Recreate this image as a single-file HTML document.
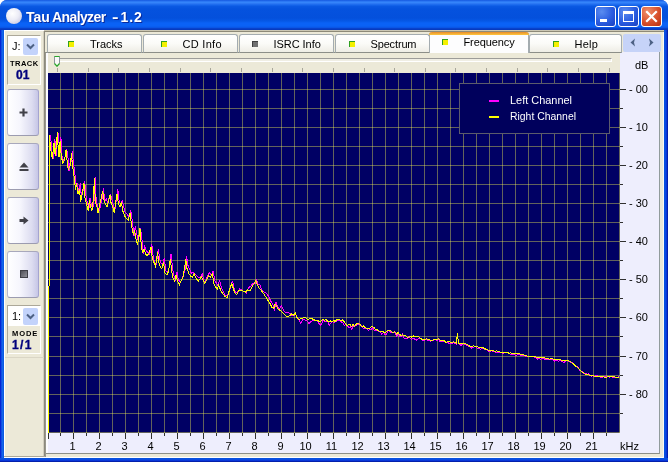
<!DOCTYPE html>
<html><head><meta charset="utf-8"><title>Tau Analyzer - 1.2</title>
<style>
html,body{margin:0;padding:0;background:#fff;}
body{width:668px;height:462px;overflow:hidden;position:relative;font-family:"Liberation Sans",sans-serif;font-size:11px;color:#000;}
#win,#win *{position:absolute;box-sizing:border-box;}
#win{will-change:transform;left:0;top:0;width:668px;height:462px;border-radius:7px 7px 0 0;overflow:hidden;
 background:#0A48D8;}
#frameL{left:0;top:30px;width:4px;height:432px;background:linear-gradient(90deg,#0019CF 0,#0831D9 25%,#166AEE 50%,#0855DD 100%);}
#frameR{left:664px;top:30px;width:4px;height:432px;background:linear-gradient(90deg,#0855DD 0,#0A4AE0 40%,#0831D9 70%,#00138C 100%);}
#frameB{left:0;top:458px;width:668px;height:4px;background:linear-gradient(180deg,#0855DD 0,#0A4AE0 40%,#0831D9 70%,#00138C 100%);}
#title{left:0;top:0;width:668px;height:30px;
 background:linear-gradient(180deg,#1458E0 0,#2C78F4 1.5px,#3484FA 2.5px,#2C78F4 3.5px,#1666EC 5px,#0A58E2 6.5px,#0552DE 9px,#0450DC 18px,#0658E6 21px,#0A62F6 23px,#0A62F6 26px,#0A56E6 27.5px,#0842CC 28.5px,#0636B8 30px);}
#tt{left:26px;width:130px;top:8px;height:18px;line-height:18px;font-size:14px;font-weight:bold;color:#fff;white-space:nowrap;text-shadow:1px 1px 0 #0A2A9C;letter-spacing:0px;}
#ico{left:6px;top:8px;width:16px;height:16px;border-radius:50%;background:radial-gradient(circle at 40% 35%,#FFFFFF 0,#ECECF6 45%,#C8C8E0 85%,#A8A8D0 100%);}
.cb{top:6px;width:21px;height:21px;border:1px solid #fff;border-radius:3px;background:radial-gradient(circle at 30% 25%,#5A8CF0 0,#2A5CE0 55%,#1840C0 100%);}
#cbx{background:radial-gradient(circle at 30% 25%,#F0906C 0,#D8502C 55%,#B83010 100%);}
#client{left:4px;top:30px;width:660px;height:428px;background:#ECE9D8;}
/* left panel */
.sunk{border:1px solid;border-color:#ACA899 #fff #fff #ACA899;background:#ECE9D8;}
.combo{background:#fff;}
.dd{background:#C3D3FB;border-radius:2px;}
.btn{left:7px;width:32px;height:47px;border:1px solid;border-color:#A8A8BC #A4A4D0 #9C9CB0 #B8B8CC;border-radius:3px;background:linear-gradient(90deg,#FFFFFF 0,#F6F6FD 40%,#DCDCF0 80%,#C6C6E6 100%);}
.pix{font-size:7px;font-weight:bold;letter-spacing:0.4px;transform-origin:0 0;transform:scaleX(1.08);white-space:nowrap;line-height:7px;}
.big{-webkit-text-stroke:0.35px #00007C;font-size:12px;letter-spacing:0px;font-weight:bold;color:#00007C;white-space:nowrap;line-height:12px;}
/* tabs */
.tab{top:34px;height:19px;border:1px solid #A4ACB0;border-bottom:1px solid #8C8E88;border-radius:3px 3px 0 0;background:linear-gradient(180deg,#FFFFFF 0,#FBFBF8 50%,#EEEDE5 100%);}
.tab span{text-align:left;top:3px;line-height:13px;white-space:nowrap;}
.tab i{width:6px;height:6px;top:6px;background:#F4F000;border-top:1px solid #30A020;border-left:1px solid #30A020;}
.tk{width:1px;background:#303030;}
.tkh{height:1px;background:#303030;}
.xl{top:440px;width:21px;text-align:center;line-height:12px;}
.yl{left:629px;margin-top:1px;line-height:13px;white-space:nowrap;}
.tt{top:68px;width:1px;height:4px;background:#A8A69A;}
</style></head><body>
<div id="win">
 <div id="title">
  <div id="ico"></div>
  <div id="tt"><span style="left:0">Tau </span><span style="left:26px;letter-spacing:-0.6px">Analyzer </span><span style="left:86px;transform:scaleX(1.4);transform-origin:0 0">- </span><span style="left:94.5px;letter-spacing:0.9px">1.2</span></div>
  <div class="cb" style="left:595px"><div style="left:4px;top:12px;width:7px;height:3px;background:#fff"></div></div>
  <div class="cb" style="left:618px"><div style="left:4px;top:4px;width:11px;height:11px;border:1px solid #fff;border-top-width:3px"></div></div>
  <div class="cb" id="cbx" style="left:641px"><svg style="left:3px;top:3px" width="13" height="13" viewBox="0 0 13 13"><path d="M2 2L11 11M11 2L2 11" stroke="#fff" stroke-width="2.2" stroke-linecap="square"/></svg></div>
 </div>
 <div id="frameL"></div><div id="frameR"></div><div id="frameB"></div>
 <div id="client">
  <!-- coordinates inside client are window coords minus (4,30) -->
  <div id="c" style="left:-4px;top:-30px;width:668px;height:462px;">
   <!-- outer lines -->
   <div style="left:4px;top:30px;width:40px;height:1px;background:#fff"></div>
   <div style="left:4px;top:30px;width:1px;height:427px;background:#fff"></div>
   <div style="left:44px;top:30px;width:620px;height:1px;background:#CBC7B4"></div>
   <div style="left:44px;top:31px;width:620px;height:1px;background:#8E8A78"></div>
   <div style="left:44px;top:31px;width:1px;height:426px;background:#8C8A7E"></div>
   <div style="left:45px;top:53px;width:1px;height:404px;background:#9A988C"></div>
   <div style="left:46px;top:53px;width:2px;height:400px;background:#FCFCFF;z-index:2"></div>
   <div style="left:4px;top:456px;width:41px;height:1px;background:#ACA899"></div>
   <div style="left:4px;top:457px;width:660px;height:1px;background:#fff"></div>
   <div style="left:663px;top:32px;width:1px;height:426px;background:#FAF9F4"></div>
   <div style="left:43px;top:31px;width:1px;height:425px;background:#D2CEBE"></div>
   <div style="left:5px;top:357px;width:39px;height:1px;background:#DAD6C6"></div>

   <!-- left box 1 -->
   <div class="sunk" style="left:7px;top:35px;width:34px;height:50px"></div>
   <div class="combo" style="left:8px;top:36px;width:32px;height:20px"></div>
   <div style="left:12px;top:40px;line-height:13px;font-size:11px">J:</div>
   <div class="dd" style="left:23px;top:38px;width:15px;height:17px"><svg style="left:3px;top:5px" width="9" height="7" viewBox="0 0 9 7"><path d="M1 1.5L4.5 5L8 1.5" fill="none" stroke="#4D6185" stroke-width="2"/></svg></div>
   <div class="pix" style="left:10px;top:60px">TRACK</div>
   <div class="big" style="left:16px;top:69px">01</div>

   <!-- buttons -->
   <div class="btn" style="top:89px"><svg style="left:11px;top:18px" width="9" height="9" viewBox="0 0 9 9"><path d="M4.5 0.5V8.5M0.5 4.5H8.5" stroke="#404048" stroke-width="2.2"/></svg></div>
   <div class="btn" style="top:143px"><svg style="left:11px;top:18px" width="10" height="10" viewBox="0 0 10 10"><path d="M5 0.5L9.5 5.5H0.5Z" fill="#404048"/><rect x="0.5" y="7" width="9" height="2" fill="#404048"/></svg></div>
   <div class="btn" style="top:197px"><svg style="left:11px;top:18px" width="10" height="9" viewBox="0 0 10 9"><path d="M0.5 3H4.5V0.5L9.5 4.5L4.5 8.5V6H0.5Z" fill="#404048"/></svg></div>
   <div class="btn" style="top:251px"><div style="left:12px;top:18px;width:8px;height:8px;background:linear-gradient(135deg,#505058,#909098);border:1px solid #404048"></div></div>

   <!-- left box 2 -->
   <div class="sunk" style="left:7px;top:305px;width:34px;height:49px"></div>
   <div class="combo" style="left:8px;top:306px;width:32px;height:20px"></div>
   <div style="left:12px;top:310px;line-height:13px;font-size:11px">1:</div>
   <div class="dd" style="left:23px;top:308px;width:15px;height:17px"><svg style="left:3px;top:5px" width="9" height="7" viewBox="0 0 9 7"><path d="M1 1.5L4.5 5L8 1.5" fill="none" stroke="#4D6185" stroke-width="2"/></svg></div>
   <div class="pix" style="left:12px;top:330px;letter-spacing:0.8px">MODE</div>
   <div class="big" style="left:12px;top:339px;letter-spacing:1.4px">1/1</div>

   <!-- tab page -->
   <div style="left:46px;top:52px;width:614px;height:402px;background:#EEEEFD;border-right:1px solid #919B9C;border-bottom:1px solid #8C8E88;"></div>
   <div style="left:45px;top:52px;width:577px;height:1px;background:#8C8E88"></div>
   <div style="left:48px;top:53px;width:572px;height:20px;background:#ECE9D8"></div>
   <!-- trackbar -->
   <div style="left:59px;top:58px;width:553px;height:4px;border:1px solid;border-color:#9D9C99 #fff #fff #9D9C99;background:#F0EEE4"></div>
   <svg style="left:54px;top:56px" width="6" height="11" viewBox="0 0 6 11"><path d="M0.5 0.5H5.5V7.5L3 10.2L0.5 7.5Z" fill="#FAFAF8" stroke="#8C949C" stroke-width="1"/><path d="M0.5 0.5H5.5" stroke="#28A828" stroke-width="1"/><path d="M0.5 7.5L3 10.2L5.5 7.5" fill="none" stroke="#28A828" stroke-width="1.2"/></svg>
   <i class="tt" style="left:57px"></i>
<i class="tt" style="left:88px"></i>
<i class="tt" style="left:118px"></i>
<i class="tt" style="left:149px"></i>
<i class="tt" style="left:180px"></i>
<i class="tt" style="left:210px"></i>
<i class="tt" style="left:241px"></i>
<i class="tt" style="left:272px"></i>
<i class="tt" style="left:302px"></i>
<i class="tt" style="left:333px"></i>
<i class="tt" style="left:364px"></i>
<i class="tt" style="left:394px"></i>
<i class="tt" style="left:425px"></i>
<i class="tt" style="left:455px"></i>
<i class="tt" style="left:486px"></i>
<i class="tt" style="left:517px"></i>
<i class="tt" style="left:547px"></i>
<i class="tt" style="left:578px"></i>
<i class="tt" style="left:609px"></i>

   <!-- tabs -->
   <div class="tab" style="left:47px;width:95px"><i style="left:20px"></i><span style="left:42px">Tracks</span></div>
   <div class="tab" style="left:143px;width:95px"><i style="left:17px"></i><span style="left:38.5px;letter-spacing:0.3px">CD Info</span></div>
   <div class="tab" style="left:239px;width:95px"><i style="left:12px;background:#707070;border-color:#404040"></i><span style="left:33.5px;letter-spacing:-0.05px">ISRC Info</span></div>
   <div class="tab" style="left:335px;width:95px"><i style="left:13px"></i><span style="left:34.5px;letter-spacing:-0.15px">Spectrum</span></div>
   <div class="tab" style="left:529px;width:93px"><i style="left:23px"></i><span style="left:44.5px;letter-spacing:0.25px">Help</span></div>
   <div class="tab" style="left:429px;top:32px;width:100px;height:21px;background:#FDFDFE;border-top:none;border-bottom:none"><div style="left:-1px;top:0;width:100px;height:3px;background:linear-gradient(180deg,#E68B2C,#FFC73C);border-radius:3px 3px 0 0"></div><i style="left:12px;top:7px"></i><span style="left:33.5px;top:4px;letter-spacing:-0.1px">Frequency</span></div>
   <!-- tab scroll -->
   <div style="left:623px;top:34px;width:38px;height:18px;background:#C6D3F8;border-radius:2px"><svg style="left:7px;top:4px" width="26" height="9" viewBox="0 0 26 9"><path d="M5 0.5L0.5 4.5L5 8.5L4 4.5ZM19 0.5L23.5 4.5L19 8.5L20 4.5Z" fill="#4D6185"/></svg></div>

   <!-- plot -->
   <svg style="left:48px;top:73px" width="572" height="360" viewBox="0 0 572 360">
    <rect x="0" y="0" width="572" height="360" fill="#000064"/>
    <g stroke="#FFFF50" stroke-opacity="0.39" stroke-width="1" shape-rendering="crispEdges">
<line x1="12.5" y1="0" x2="12.5" y2="360"/>
<line x1="25.5" y1="0" x2="25.5" y2="360"/>
<line x1="38.5" y1="0" x2="38.5" y2="360"/>
<line x1="51.5" y1="0" x2="51.5" y2="360"/>
<line x1="64.5" y1="0" x2="64.5" y2="360"/>
<line x1="77.5" y1="0" x2="77.5" y2="360"/>
<line x1="90.5" y1="0" x2="90.5" y2="360"/>
<line x1="103.5" y1="0" x2="103.5" y2="360"/>
<line x1="116.5" y1="0" x2="116.5" y2="360"/>
<line x1="129.5" y1="0" x2="129.5" y2="360"/>
<line x1="142.5" y1="0" x2="142.5" y2="360"/>
<line x1="155.5" y1="0" x2="155.5" y2="360"/>
<line x1="168.5" y1="0" x2="168.5" y2="360"/>
<line x1="181.5" y1="0" x2="181.5" y2="360"/>
<line x1="194.5" y1="0" x2="194.5" y2="360"/>
<line x1="207.5" y1="0" x2="207.5" y2="360"/>
<line x1="220.5" y1="0" x2="220.5" y2="360"/>
<line x1="233.5" y1="0" x2="233.5" y2="360"/>
<line x1="246.5" y1="0" x2="246.5" y2="360"/>
<line x1="259.5" y1="0" x2="259.5" y2="360"/>
<line x1="272.5" y1="0" x2="272.5" y2="360"/>
<line x1="285.5" y1="0" x2="285.5" y2="360"/>
<line x1="298.5" y1="0" x2="298.5" y2="360"/>
<line x1="311.5" y1="0" x2="311.5" y2="360"/>
<line x1="324.5" y1="0" x2="324.5" y2="360"/>
<line x1="337.5" y1="0" x2="337.5" y2="360"/>
<line x1="350.5" y1="0" x2="350.5" y2="360"/>
<line x1="363.5" y1="0" x2="363.5" y2="360"/>
<line x1="376.5" y1="0" x2="376.5" y2="360"/>
<line x1="389.5" y1="0" x2="389.5" y2="360"/>
<line x1="402.5" y1="0" x2="402.5" y2="360"/>
<line x1="415.5" y1="0" x2="415.5" y2="360"/>
<line x1="428.5" y1="0" x2="428.5" y2="360"/>
<line x1="441.5" y1="0" x2="441.5" y2="360"/>
<line x1="454.5" y1="0" x2="454.5" y2="360"/>
<line x1="467.5" y1="0" x2="467.5" y2="360"/>
<line x1="480.5" y1="0" x2="480.5" y2="360"/>
<line x1="493.5" y1="0" x2="493.5" y2="360"/>
<line x1="506.5" y1="0" x2="506.5" y2="360"/>
<line x1="519.5" y1="0" x2="519.5" y2="360"/>
<line x1="532.5" y1="0" x2="532.5" y2="360"/>
<line x1="545.5" y1="0" x2="545.5" y2="360"/>
<line x1="558.5" y1="0" x2="558.5" y2="360"/>
<line x1="571.5" y1="0" x2="571.5" y2="360"/>
<line x1="0" y1="16.5" x2="572" y2="16.5"/>
<line x1="0" y1="35.5" x2="572" y2="35.5"/>
<line x1="0" y1="54.5" x2="572" y2="54.5"/>
<line x1="0" y1="73.5" x2="572" y2="73.5"/>
<line x1="0" y1="92.5" x2="572" y2="92.5"/>
<line x1="0" y1="111.5" x2="572" y2="111.5"/>
<line x1="0" y1="130.5" x2="572" y2="130.5"/>
<line x1="0" y1="149.5" x2="572" y2="149.5"/>
<line x1="0" y1="168.5" x2="572" y2="168.5"/>
<line x1="0" y1="187.5" x2="572" y2="187.5"/>
<line x1="0" y1="206.5" x2="572" y2="206.5"/>
<line x1="0" y1="225.5" x2="572" y2="225.5"/>
<line x1="0" y1="244.5" x2="572" y2="244.5"/>
<line x1="0" y1="263.5" x2="572" y2="263.5"/>
<line x1="0" y1="283.5" x2="572" y2="283.5"/>
<line x1="0" y1="302.5" x2="572" y2="302.5"/>
<line x1="0" y1="321.5" x2="572" y2="321.5"/>
<line x1="0" y1="340.5" x2="572" y2="340.5"/>
<line x1="0" y1="359.5" x2="572" y2="359.5"/>
    </g>
    <rect x="411.5" y="10.5" width="150" height="50" fill="#00005C" stroke="#5C5C6C" shape-rendering="crispEdges"/>
    <line x1="441" y1="28" x2="451" y2="28" stroke="#FF00FF" stroke-width="2" shape-rendering="crispEdges"/>
    <line x1="441" y1="44" x2="451" y2="44" stroke="#FFFF00" stroke-width="2" shape-rendering="crispEdges"/>
    <text x="462" y="30.5" textLength="62" lengthAdjust="spacingAndGlyphs" fill="#fff" font-family="Liberation Sans, sans-serif" font-size="11">Left Channel</text>
    <text x="462" y="46.5" textLength="66" lengthAdjust="spacingAndGlyphs" fill="#fff" font-family="Liberation Sans, sans-serif" font-size="11">Right Channel</text>
    <path d="M1.5 62V213M0.5 213V360" stroke="#FFFF00" stroke-width="1" fill="none" shape-rendering="crispEdges"/>
    <polyline fill="none" stroke="#FF00FF" stroke-width="1" shape-rendering="crispEdges" points="2.0,62.3 2.9,66.5 3.7,76.9 5.1,86.4 5.8,76.5 6.9,66.5 8.0,83.2 9.1,69.4 10.2,60.4 10.9,69.0 11.8,80.2 12.9,64.3 14.0,83.4 15.6,88.0 16.7,85.4 17.7,80.5 18.8,76.6 19.9,83.9 21.0,97.8 22.1,89.9 23.2,88.3 24.2,78.2 25.3,89.1 26.4,96.1 27.4,106.3 28.2,112.6 29.3,111.3 30.8,119.4 32.3,110.3 33.4,124.4 35.2,117.4 36.7,108.2 37.8,122.4 39.5,130.1 41.0,134.8 42.1,124.6 43.2,130.8 44.7,136.5 46.4,125.2 47.1,103.6 48.2,127.9 49.7,133.4 50.7,138.9 52.5,132.8 54.0,125.9 55.5,115.5 56.8,128.5 58.3,126.2 59.8,130.3 61.6,122.5 62.7,121.4 63.7,125.5 65.5,133.6 67.0,136.4 68.5,125.0 69.8,116.4 71.3,129.9 72.8,130.2 74.1,127.5 75.6,134.0 77.2,139.6 78.9,141.0 81.1,143.7 82.8,137.5 84.5,150.0 86.0,163.1 87.3,152.7 88.8,161.3 90.4,169.1 91.7,158.3 92.7,156.2 94.1,168.1 95.4,181.1 96.8,173.5 98.4,178.1 100.1,179.4 101.8,181.2 103.8,170.9 105.1,182.5 106.6,189.5 108.3,191.3 110.3,175.7 111.6,186.0 113.1,190.4 114.8,191.1 116.3,184.9 117.8,197.7 119.6,199.8 121.3,194.5 123.1,180.7 124.4,194.1 126.1,203.8 127.6,207.1 128.9,198.9 130.4,206.9 132.2,208.6 133.7,207.2 135.8,200.2 137.3,195.8 138.6,183.5 139.8,192.0 141.7,196.4 143.4,200.3 145.1,199.7 147.1,201.3 148.8,202.9 151.0,204.5 152.5,203.4 154.2,201.0 156.0,208.3 157.5,208.1 159.6,202.6 161.2,199.6 163.3,202.2 165.1,198.2 166.8,207.9 168.3,210.0 170.0,212.8 171.5,206.7 173.3,214.5 175.4,219.2 177.6,223.1 179.8,221.4 181.3,218.3 183.2,210.9 184.7,208.3 186.2,216.4 188.0,219.7 189.7,218.4 191.8,215.9 194.0,217.4 196.2,218.5 198.3,219.9 200.5,214.6 202.7,213.1 204.8,210.4 207.0,210.9 208.5,207.1 210.0,211.3 211.8,211.3 213.9,217.0 216.1,219.3 218.3,220.2 220.4,222.9 222.6,227.7 224.8,231.8 226.5,236.5 228.0,229.2 229.5,233.0 231.2,235.9 233.4,232.9 235.6,237.4 237.7,239.9 239.9,239.1 242.1,240.7 243.7,242.9 245.9,242.4 247.6,240.9 249.1,243.8 250.7,246.3 252.8,250.2 255.0,246.2 257.1,247.2 258.9,247.6 261.0,250.8 263.2,248.2 265.3,247.6 267.5,247.1 269.7,248.6 272.3,252.5 273.8,250.2 275.3,246.6 276.8,248.7 278.3,248.2 279.8,248.9 281.3,252.4 282.8,250.1 284.3,248.8 285.8,249.5 287.3,248.8 288.8,247.7 290.3,248.0 291.8,247.6 293.3,248.9 294.8,249.5 296.3,252.8 297.8,250.9 299.3,252.5 300.8,254.8 302.3,254.0 303.8,256.5 305.3,252.8 306.8,253.0 308.3,252.3 309.8,251.9 311.3,250.2 312.8,251.8 314.3,254.8 315.8,255.3 317.3,254.9 318.8,255.8 320.3,257.5 321.8,256.8 323.3,256.8 324.8,253.9 326.3,257.4 327.8,257.7 329.3,256.4 330.8,258.6 332.3,258.9 333.8,261.3 335.3,259.4 336.8,261.2 338.3,261.2 339.8,257.9 341.3,257.5 342.8,259.4 344.3,259.1 345.8,259.4 347.3,259.7 348.8,263.5 350.3,260.5 351.8,263.2 353.3,263.7 354.8,261.0 356.3,265.9 357.8,265.1 359.3,265.7 360.8,263.9 362.3,265.5 363.8,266.2 365.3,265.1 366.8,266.4 368.3,267.1 369.8,266.2 371.3,265.7 372.5,265.7 374.0,267.3 375.5,267.2 377.0,267.1 378.5,265.9 380.0,267.8 381.5,267.8 383.0,268.1 384.5,267.6 386.0,267.2 387.5,266.4 389.0,267.4 390.5,266.5 392.0,268.5 393.5,268.1 395.0,269.0 396.5,268.8 398.0,270.1 399.5,269.1 401.0,270.4 402.5,270.2 404.0,270.4 405.5,268.8 407.0,270.6 408.3,271.3 409.4,261.1 410.5,270.6 411.5,271.4 413.0,272.3 414.5,271.1 416.0,270.9 417.5,271.2 419.0,272.3 420.5,273.4 422.0,273.8 423.5,275.1 425.0,274.1 426.5,273.9 428.0,273.7 429.5,275.3 431.0,274.9 432.5,276.2 434.0,275.3 435.5,275.4 437.0,277.1 438.5,276.7 440.0,278.3 441.5,278.4 443.0,277.9 444.5,278.1 446.0,278.7 447.5,279.4 449.0,279.3 450.5,279.1 452.0,279.6 453.5,279.6 455.0,281.1 456.5,279.5 458.0,279.7 459.5,279.6 461.0,280.8 462.5,281.3 464.0,281.5 465.5,281.6 467.0,282.1 468.5,282.3 470.0,281.3 471.5,281.2 473.0,282.8 474.5,282.8 476.0,282.2 477.5,283.3 479.0,283.7 480.5,283.8 482.0,283.5 483.5,283.6 485.0,283.6 486.5,284.2 488.0,284.5 489.5,286.1 491.0,285.1 492.5,286.2 494.0,285.2 495.5,285.4 497.0,286.3 498.5,286.7 500.0,286.2 501.5,286.2 503.0,286.6 504.5,286.5 506.0,288.3 507.5,287.0 509.0,287.2 510.5,288.4 512.0,286.8 513.5,288.0 515.0,289.0 516.5,289.0 518.0,287.9 519.5,287.8 521.0,288.2 522.5,289.2 524.0,289.3 525.5,291.0 527.0,292.9 528.5,293.2 530.0,294.4 531.5,297.3 533.0,298.2 534.5,298.7 536.0,300.3 537.5,300.6 539.0,301.2 540.5,300.9 542.0,302.8 543.5,303.3 545.0,302.8 546.5,303.6 548.0,302.5 549.5,302.9 551.0,303.6 552.5,304.5 554.0,304.2 555.5,303.6 557.0,303.5 558.5,303.8 560.0,303.6 561.5,304.3 563.0,303.1 564.5,304.1 566.0,304.0 567.5,304.4 569.0,304.5 570.5,304.2 570.7,303.5"/>
    <polyline fill="none" stroke="#FFFF00" stroke-width="1" shape-rendering="crispEdges" points="1.2,63.8 2.1,69.7 2.9,77.3 4.3,86.0 5.0,79.5 6.1,69.7 7.2,82.7 8.3,73.0 9.4,58.9 10.1,74.0 11.0,83.8 12.1,67.6 13.2,82.7 14.8,90.3 15.9,88.0 16.9,85.0 18.0,77.0 19.1,88.0 20.2,96.8 21.3,94.6 22.4,92.5 23.4,80.5 24.5,92.5 25.6,100.0 26.6,108.0 27.4,116.5 28.5,110.0 30.0,120.6 31.5,116.3 32.6,129.3 34.4,120.6 35.9,109.8 37.0,124.9 38.7,131.4 40.2,137.9 41.3,127.1 42.4,133.6 43.9,137.9 45.6,124.9 46.3,105.4 47.4,129.3 48.9,133.6 49.9,140.1 51.7,131.4 53.2,124.9 54.7,118.4 56.0,127.1 57.5,131.4 59.0,133.6 60.8,127.1 61.9,121.7 62.9,129.3 64.7,133.6 66.2,140.1 67.7,129.3 69.0,120.6 70.5,131.4 72.0,133.6 73.3,129.3 74.8,137.9 76.4,142.2 78.1,145.5 80.3,147.0 82.0,140.0 83.7,152.8 85.2,161.4 86.5,157.0 88.0,165.7 89.6,172.2 90.9,163.6 91.9,155.0 93.3,172.0 94.6,180.3 96.0,176.0 97.6,181.4 99.3,182.5 101.0,180.3 103.0,173.8 104.3,185.7 105.8,189.0 107.5,193.3 109.5,179.2 110.8,189.0 112.3,194.4 114.0,195.4 115.5,189.0 117.0,199.8 118.8,202.0 120.5,198.7 122.3,185.7 123.6,197.6 125.3,206.3 126.8,208.4 128.1,202.0 129.6,208.4 131.4,211.7 132.9,208.4 135.0,204.0 136.5,195.4 137.8,185.7 139.0,195.4 140.9,200.9 142.6,203.0 144.3,204.0 146.3,200.9 148.0,205.2 150.2,208.4 151.7,206.3 153.4,204.0 155.2,207.3 156.7,210.6 158.8,206.3 160.4,203.0 162.5,204.0 164.3,200.9 166.0,210.6 167.5,213.8 169.2,216.0 170.7,211.7 172.5,217.0 174.6,220.3 176.8,223.5 179.0,224.7 180.5,220.3 182.4,213.8 183.9,210.5 185.4,216.0 187.2,220.3 188.9,221.4 191.0,217.0 193.2,217.0 195.4,218.1 197.5,219.2 199.7,217.0 201.9,218.1 204.0,213.8 206.2,210.5 207.7,207.7 209.2,211.6 211.0,214.9 213.1,217.0 215.3,220.3 217.5,223.5 219.6,226.8 221.8,230.0 224.0,234.4 225.7,235.4 227.2,231.0 228.7,233.3 230.4,236.5 232.6,237.6 234.8,239.8 236.9,242.0 239.1,244.1 241.3,243.0 243.4,240.9 245.6,242.0 247.3,239.8 248.8,244.1 250.4,246.3 252.5,245.8 254.7,245.2 256.8,244.1 258.6,245.8 260.7,246.3 262.9,245.2 265.0,246.3 267.2,247.4 269.4,247.4 272.0,249.0 273.5,247.4 275.0,245.8 276.5,247.5 278.0,246.3 279.5,248.3 281.0,248.3 282.5,247.9 284.0,249.1 285.5,247.4 287.0,248.4 288.5,246.9 290.0,246.4 291.5,246.7 293.0,248.0 294.5,247.0 296.0,248.4 297.5,250.6 299.0,252.5 300.5,251.8 302.0,251.6 303.5,253.6 305.0,251.4 306.5,253.6 308.0,251.3 309.5,250.1 311.0,250.8 312.5,252.1 314.0,254.2 315.5,253.1 317.0,254.7 318.5,255.4 320.0,255.2 321.5,255.5 323.0,254.0 324.5,253.8 326.0,254.2 327.5,256.4 329.0,256.8 330.5,257.5 332.0,258.7 333.5,258.6 335.0,258.5 336.5,259.9 338.0,259.1 339.5,257.6 341.0,257.8 342.5,257.7 344.0,259.0 345.5,259.2 347.0,258.7 348.5,260.9 350.0,259.7 351.5,261.2 353.0,262.6 354.5,261.8 356.0,263.0 357.5,262.5 359.0,264.0 360.5,264.1 362.0,263.6 363.5,264.1 365.0,262.8 366.5,263.5 368.0,263.3 369.5,263.3 371.0,263.8 372.5,265.3 374.0,266.3 375.5,266.1 377.0,266.9 378.5,265.8 380.0,267.0 381.5,266.9 383.0,267.5 384.5,267.2 386.0,266.2 387.5,266.4 389.0,266.9 390.5,265.8 392.0,267.0 393.5,267.1 395.0,267.6 396.5,268.0 398.0,269.7 399.5,268.7 401.0,268.9 402.5,269.1 404.0,269.9 405.5,268.8 407.0,269.8 408.3,270.2 409.4,260.4 410.5,270.2 411.5,270.3 413.0,270.8 414.5,270.7 416.0,270.8 417.5,270.7 419.0,271.6 420.5,272.3 422.0,273.5 423.5,273.8 425.0,272.9 426.5,273.1 428.0,273.4 429.5,273.7 431.0,274.4 432.5,274.9 434.0,274.9 435.5,275.0 437.0,275.9 438.5,276.2 440.0,276.8 441.5,277.6 443.0,277.6 444.5,277.7 446.0,278.0 447.5,278.3 449.0,277.8 450.5,278.9 452.0,279.0 453.5,279.3 455.0,279.5 456.5,279.3 458.0,279.6 459.5,279.5 461.0,280.2 462.5,279.9 464.0,280.1 465.5,280.4 467.0,280.5 468.5,280.8 470.0,280.8 471.5,280.9 473.0,281.3 474.5,281.6 476.0,282.1 477.5,282.2 479.0,283.1 480.5,283.2 482.0,283.0 483.5,283.3 485.0,283.6 486.5,283.8 488.0,283.9 489.5,284.6 491.0,284.9 492.5,284.7 494.0,284.9 495.5,284.8 497.0,285.0 498.5,285.4 500.0,285.5 501.5,286.1 503.0,285.8 504.5,285.9 506.0,286.8 507.5,286.7 509.0,286.6 510.5,287.0 512.0,286.8 513.5,287.3 515.0,287.7 516.5,287.8 518.0,287.8 519.5,287.7 521.0,288.1 522.5,288.7 524.0,289.9 525.5,290.8 527.0,292.5 528.5,293.7 530.0,295.0 531.5,296.8 533.0,298.2 534.5,299.3 536.0,300.2 537.5,301.1 539.0,301.8 540.5,301.9 542.0,302.6 543.5,302.8 545.0,302.8 546.5,303.1 548.0,303.5 549.5,303.5 551.0,303.8 552.5,304.0 554.0,303.7 555.5,304.0 557.0,304.1 558.5,304.1 560.0,303.8 561.5,303.8 563.0,303.8 564.5,303.8 566.0,303.8 567.5,304.1 569.0,304.3 570.5,304.2 570.7,304.0"/>
   </svg>
   <!-- axes -->
   <i class="tk" style="left:48px;top:433px;height:6px"></i>
<i class="tk" style="left:60px;top:433px;height:3px"></i>
<i class="tk" style="left:73px;top:433px;height:6px"></i>
<span class="xl" style="left:62px">1</span>
<i class="tk" style="left:86px;top:433px;height:3px"></i>
<i class="tk" style="left:99px;top:433px;height:6px"></i>
<span class="xl" style="left:88px">2</span>
<i class="tk" style="left:112px;top:433px;height:3px"></i>
<i class="tk" style="left:125px;top:433px;height:6px"></i>
<span class="xl" style="left:114px">3</span>
<i class="tk" style="left:138px;top:433px;height:3px"></i>
<i class="tk" style="left:151px;top:433px;height:6px"></i>
<span class="xl" style="left:140px">4</span>
<i class="tk" style="left:164px;top:433px;height:3px"></i>
<i class="tk" style="left:177px;top:433px;height:6px"></i>
<span class="xl" style="left:166px">5</span>
<i class="tk" style="left:190px;top:433px;height:3px"></i>
<i class="tk" style="left:203px;top:433px;height:6px"></i>
<span class="xl" style="left:192px">6</span>
<i class="tk" style="left:216px;top:433px;height:3px"></i>
<i class="tk" style="left:229px;top:433px;height:6px"></i>
<span class="xl" style="left:218px">7</span>
<i class="tk" style="left:242px;top:433px;height:3px"></i>
<i class="tk" style="left:255px;top:433px;height:6px"></i>
<span class="xl" style="left:244px">8</span>
<i class="tk" style="left:268px;top:433px;height:3px"></i>
<i class="tk" style="left:281px;top:433px;height:6px"></i>
<span class="xl" style="left:270px">9</span>
<i class="tk" style="left:294px;top:433px;height:3px"></i>
<i class="tk" style="left:307px;top:433px;height:6px"></i>
<span class="xl" style="left:295px">10</span>
<i class="tk" style="left:320px;top:433px;height:3px"></i>
<i class="tk" style="left:333px;top:433px;height:6px"></i>
<span class="xl" style="left:321px">11</span>
<i class="tk" style="left:346px;top:433px;height:3px"></i>
<i class="tk" style="left:359px;top:433px;height:6px"></i>
<span class="xl" style="left:347px">12</span>
<i class="tk" style="left:372px;top:433px;height:3px"></i>
<i class="tk" style="left:385px;top:433px;height:6px"></i>
<span class="xl" style="left:373px">13</span>
<i class="tk" style="left:398px;top:433px;height:3px"></i>
<i class="tk" style="left:411px;top:433px;height:6px"></i>
<span class="xl" style="left:399px">14</span>
<i class="tk" style="left:424px;top:433px;height:3px"></i>
<i class="tk" style="left:437px;top:433px;height:6px"></i>
<span class="xl" style="left:425px">15</span>
<i class="tk" style="left:450px;top:433px;height:3px"></i>
<i class="tk" style="left:463px;top:433px;height:6px"></i>
<span class="xl" style="left:451px">16</span>
<i class="tk" style="left:476px;top:433px;height:3px"></i>
<i class="tk" style="left:489px;top:433px;height:6px"></i>
<span class="xl" style="left:477px">17</span>
<i class="tk" style="left:502px;top:433px;height:3px"></i>
<i class="tk" style="left:515px;top:433px;height:6px"></i>
<span class="xl" style="left:503px">18</span>
<i class="tk" style="left:528px;top:433px;height:3px"></i>
<i class="tk" style="left:541px;top:433px;height:6px"></i>
<span class="xl" style="left:529px">19</span>
<i class="tk" style="left:554px;top:433px;height:3px"></i>
<i class="tk" style="left:567px;top:433px;height:6px"></i>
<span class="xl" style="left:555px">20</span>
<i class="tk" style="left:580px;top:433px;height:3px"></i>
<i class="tk" style="left:593px;top:433px;height:6px"></i>
<span class="xl" style="left:581px">21</span>
<i class="tk" style="left:606px;top:433px;height:3px"></i>
   <i class="tkh" style="left:620px;top:89px;width:6px"></i>
<span class="yl" style="top:82px">- 00</span>
<i class="tkh" style="left:620px;top:108px;width:3px"></i>
<i class="tkh" style="left:620px;top:127px;width:6px"></i>
<span class="yl" style="top:120px">- 10</span>
<i class="tkh" style="left:620px;top:146px;width:3px"></i>
<i class="tkh" style="left:620px;top:165px;width:6px"></i>
<span class="yl" style="top:158px">- 20</span>
<i class="tkh" style="left:620px;top:184px;width:3px"></i>
<i class="tkh" style="left:620px;top:203px;width:6px"></i>
<span class="yl" style="top:196px">- 30</span>
<i class="tkh" style="left:620px;top:222px;width:3px"></i>
<i class="tkh" style="left:620px;top:241px;width:6px"></i>
<span class="yl" style="top:234px">- 40</span>
<i class="tkh" style="left:620px;top:260px;width:3px"></i>
<i class="tkh" style="left:620px;top:279px;width:6px"></i>
<span class="yl" style="top:272px">- 50</span>
<i class="tkh" style="left:620px;top:298px;width:3px"></i>
<i class="tkh" style="left:620px;top:317px;width:6px"></i>
<span class="yl" style="top:310px">- 60</span>
<i class="tkh" style="left:620px;top:336px;width:3px"></i>
<i class="tkh" style="left:620px;top:356px;width:6px"></i>
<span class="yl" style="top:349px">- 70</span>
<i class="tkh" style="left:620px;top:375px;width:3px"></i>
<i class="tkh" style="left:620px;top:394px;width:6px"></i>
<span class="yl" style="top:387px">- 80</span>
<i class="tkh" style="left:620px;top:413px;width:3px"></i>
   <div style="left:635px;top:59px;line-height:13px">dB</div>
   <div style="left:620px;top:440px;line-height:12px">kHz</div>
  </div>
 </div>
</div>
</body></html>
